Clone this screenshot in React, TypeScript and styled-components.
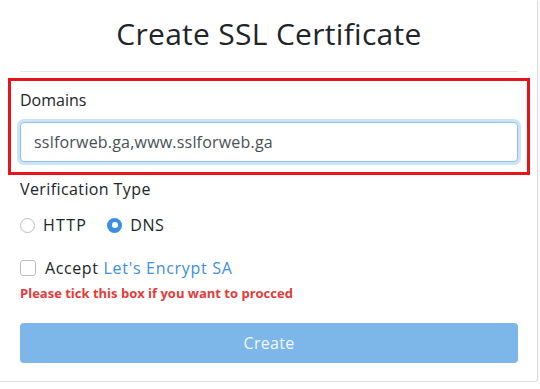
import React from "react";
import styled, { createGlobalStyle } from "styled-components";

const Global = createGlobalStyle`
  html, body { margin: 0; padding: 0; background: #ffffff; }
  body { font-family: "Open Sans", "Noto Sans", sans-serif; color: #212529; }
  * { box-sizing: border-box; }
`;

const Card = styled.div`
  width: 538px;
  background: #fff;
  border-right: 1px solid #dedede;
  border-bottom: 1px solid #dedede;
  border-bottom-right-radius: 4px;
  box-shadow: 1px 1px 2px rgba(0, 0, 0, 0.05);
  padding: 0 19px 18px 20px;
  display: flex;
  flex-direction: column;
`;

const Title = styled.h1`
  margin: 14px 0 17px;
  font-size: 30px;
  line-height: 40px;
  font-weight: 400;
  text-align: center;
  color: #212529;
  letter-spacing: 0.3px;
`;

const Rule = styled.hr`
  margin: 0;
  border: 0;
  border-top: 1px solid #e6e6e6;
`;

const Highlight = styled.div`
  margin: 6px -12px 0;
  border: 3px solid #e8141b;
  padding: 7px 9px 10px;
  display: flex;
  flex-direction: column;
`;

const Label = styled.div<{ $mt?: number; $ls?: number }>`
  margin-top: ${(p) => p.$mt ?? 0}px;
  font-size: 16px;
  line-height: 24px;
  letter-spacing: ${(p) => p.$ls ?? 0}px;
  color: #212529;
`;

const Input = styled.input`
  margin-top: 10px;
  height: 40px;
  width: 100%;
  border: 1px solid #8fc1ee;
  border-radius: 4px;
  box-shadow: 0 0 0 3px #cde3f7;
  padding: 0 13px;
  font-family: inherit;
  font-size: 16px;
  letter-spacing: 0.2px;
  color: #495057;
  outline: none;
  background: #fff;
`;

const Row = styled.div<{ $mt: number }>`
  margin-top: ${(p) => p.$mt}px;
  display: flex;
  align-items: center;
  height: 24px;
  font-size: 16px;
  color: #212529;
`;

const Option = styled.label<{ $ls: number }>`
  display: flex;
  align-items: center;
  gap: 8px;
  margin-right: 20px;
  letter-spacing: ${(p) => p.$ls}px;
`;

const Radio = styled.span<{ $on?: boolean }>`
  width: 15px;
  height: 15px;
  border-radius: 50%;
  border: ${(p) => (p.$on ? "none" : "1px solid #b8bec4")};
  background: ${(p) => (p.$on ? "#3b8fe0" : "#fff")};
  display: flex;
  align-items: center;
  justify-content: center;
  &::after {
    content: "";
    display: ${(p) => (p.$on ? "block" : "none")};
    width: 6px;
    height: 6px;
    border-radius: 50%;
    background: #fff;
  }
`;

const Check = styled.span`
  width: 16px;
  height: 16px;
  border: 1px solid #b8bec4;
  border-radius: 3px;
  background: #fff;
  margin-right: 9px;
`;

const Accept = styled.span`
  letter-spacing: 0.6px;
`;

const Link = styled.a`
  color: #3b8fe0;
  text-decoration: none;
  margin-left: 5px;
  letter-spacing: 0.7px;
`;

const Error = styled.div`
  margin-top: 4px;
  font-size: 13px;
  line-height: 18px;
  font-weight: 700;
  color: #e53a3a;
`;

const Button = styled.button`
  margin-top: 21px;
  height: 40px;
  width: 100%;
  border: none;
  border-radius: 4px;
  background: #7db6e8;
  color: #f4f9fd;
  font-family: inherit;
  font-size: 16px;
  letter-spacing: 0.3px;
`;

export default function App() {
  return (
    <>
      <Global />
      <Card>
        <Title>Create SSL Certificate</Title>
        <Rule />
        <Highlight>
          <Label>Domains</Label>
          <Input readOnly value="sslforweb.ga,www.sslforweb.ga" />
        </Highlight>
        <Label $mt={2} $ls={0.4}>
          Verification Type
        </Label>
        <Row $mt={12}>
          <Option $ls={1.3}>
            <Radio />
            HTTP
          </Option>
          <Option $ls={0.6}>
            <Radio $on />
            DNS
          </Option>
        </Row>
        <Row $mt={19}>
          <Check />
          <Accept>Accept</Accept>
          <Link>Let's Encrypt SA</Link>
        </Row>
        <Error>Please tick this box if you want to procced</Error>
        <Button disabled>Create</Button>
      </Card>
    </>
  );
}
